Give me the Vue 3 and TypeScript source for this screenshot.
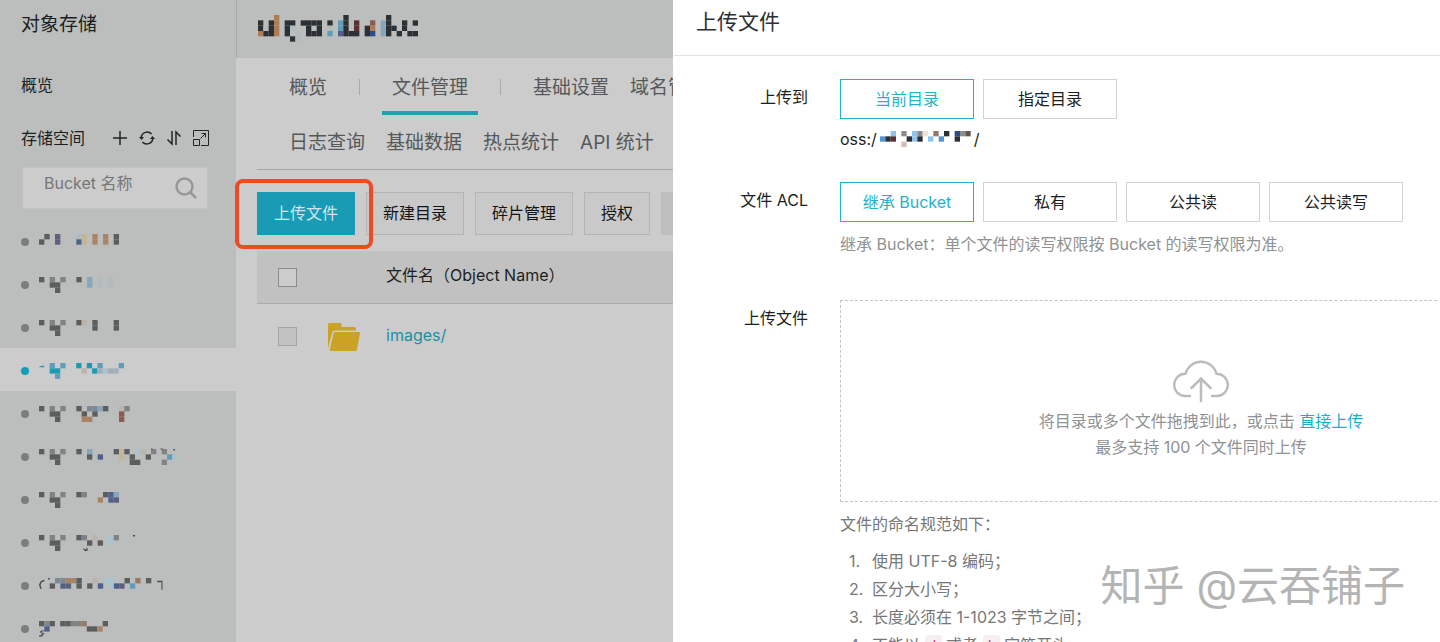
<script setup lang="ts">
import { ref } from 'vue'

interface Cell { x: number; y: number; fill: string }
interface Mosaic { cells: Cell[]; cols: number; rows: number; width: number; height: number }

const palette: Record<string, string> = {
  D: '#2b3034', d: '#5b5d5f', g: '#808283', n: '#5d5f7c', N: '#505f8a', s: '#7d8891',
  b: '#84a6be', B: '#5f9db9', l: '#a9c4cf', x: '#a3aebb', y: '#c3b596', t: '#a98464',
  p: '#bcb3ab', r: '#8a5c54', C: '#1a9bb0', o: '#ad7c54', m: '#5a3133', k: '#b9babb',
  i: '#8fc3ec', u: '#5595ce', v: '#f2e2d6', w: '#d3bfba', q: '#8c8c8d', z: '#2e4c8c',
  j: '#5f564e', h: '#9a7962', e: '#b2bbbe',
}

function mosaic(lines: string[]): Mosaic {
  const cols = Math.max(...lines.map((line) => line.length))
  const cells: Cell[] = []
  lines.forEach((line, y) => {
    Array.from(line).forEach((key, x) => {
      if (palette[key]) cells.push({ x, y, fill: palette[key] })
    })
  })
  return {
    cells, cols, rows: lines.length,
    width: Math.round((cols * 16) / 3),
    height: Math.round((lines.length * 16) / 3),
  }
}

const bucketTitle = mosaic([
  '...o............D.......D.....',
  'D.Do.DD.DDDD.D.BD.m..r.bD..D.D',
  'DkDo.De..D.D.e.BD.m.Do.bDD.Dk.',
  'oDDo.D.e.DDD.B.NDDD.Dz.bD.D.DD',
  '......De......................',
])

const objectPath = mosaic([
  '..i.q.iqv.h.D.zqj',
  'uDm..DiD.i.u..D..',
  '....w............',
])

const buckets = [
  { art: mosaic(['.d.n...ey.t.t.d', 'd..n...Ny.t.t.d']), active: false, strokes: '' },
  { art: mosaic(['d.g.g..d.b.e.e', '..dd.....b.e.e', '...d']), active: false, strokes: '' },
  { art: mosaic(['d.g.g..dp.d...d', '..dd......d...d', '...d']), active: false, strokes: '' },
  { art: mosaic(['..B.B..C.C.B...B', '..CC....p.Cxlxx', '...B']), active: true, strokes: 'M0 .7L.5 .5H1V.8H0Z' },
  { art: mosaic(['d.g.g..d.ssbd..pg', '..dd....d.d....r', '...d....tt.....r']), active: false, strokes: '' },
  { art: mosaic(['d.g.g..d.b....dyd.lp.g.g..', '..dd.....d.N...y.d..d...Bl', '...d.............dd....g']), active: false, strokes: 'M21 -.1h.3v.2h-.3zM22.8 -.1h.4v.2h-.4zM25.2 0h.3v.3h-.3z' },
  { art: mosaic(['d.g.g..dg...dNb', '..dd.......t.Nn', '...d']), active: false, strokes: '' },
  { art: mosaic(['d.g.g..dg.p..lg...', '..dd.....d.d.l', '...d....k']), active: false, strokes: 'M17.6 0h.4v.3h-.4zM8.2 2.5L8.9 2.7V2.4H9.1V3H8.6Z' },
  { art: mosaic(['...ssttd..p.ll..d.h.d..', '..d.Nn.d.d.N.lNn.B']), active: false, strokes: 'M1 .3L.3 .6L0 1.2L.2 2L.5 2.1L.3 1.3L.5 .8L1 .6ZM1.7 0h.3v.3h-.3zM22.1 .5H23.1V2.2H22.9V.8H22.1Z' },
  { art: mosaic(['dsd.ddggh...d', '.N.......ddt', '']), active: false, strokes: 'M.2 1.9L.9 1.7V1.9L.3 2.1ZM.1 2.2L.7 2.4L.3 2.7H0V2.9H.6L1 2.3L.4 2.1Z' },
]

const target = ref('当前目录')
const targets = ['当前目录', '指定目录']
const acl = ref('继承 Bucket')
const acls = ['继承 Bucket', '私有', '公共读', '公共读写']
const keyword = ref('')
const secondaryTabs = ['日志查询', '基础数据', '热点统计', 'API 统计']
</script>

<template>
  <div class="app">
    <div class="console">
      <aside class="sidebar">
        <h1 class="product">对象存储</h1>
        <a class="overview" href="#">概览</a>
        <div class="space-head">
          <span class="space-title">存储空间</span>
          <button class="tool" type="button" aria-label="新建">
            <svg viewBox="0 0 16 16"><path d="M8 1v14M1 8h14" /></svg>
          </button>
          <button class="tool" type="button" aria-label="刷新">
            <svg viewBox="0 0 16 16">
              <path d="M2.2 7.5A6 6 0 0 1 12.6 4M13.8 8.5A6 6 0 0 1 3.4 12" />
              <path class="solid" d="M0 7h5L2.500 10zM11 9h5l-2.500-3z" />
            </svg>
          </button>
          <button class="tool" type="button" aria-label="排序">
            <svg viewBox="0 0 16 16"><path d="M6 1v13L1.500 9.500M10 15V2L14.500 6.500" /></svg>
          </button>
          <button class="tool" type="button" aria-label="展开">
            <svg viewBox="0 0 16 16">
              <path class="thin" d="M.5 7V.5h15v15H8M.5 9.500h6v6h-6zM7.500 8.500l5-5M8.500 3.500h4v4" />
            </svg>
          </button>
        </div>
        <div class="search">
          <input v-model="keyword" type="text" placeholder="Bucket 名称" aria-label="Bucket 名称" />
          <svg class="lens" viewBox="0 0 22 22"><circle cx="9.500" cy="9.500" r="8" /><path d="M15.500 15.500l5.500 5.500" /></svg>
        </div>
        <ul class="buckets">
          <li v-for="(bucket, i) in buckets" :key="i">
            <a href="#" class="bucket" :class="{ active: bucket.active }">
              <span class="dot"></span>
              <svg
                class="mosaic"
                :width="bucket.art.width"
                :height="bucket.art.height"
                :viewBox="`0 0 ${bucket.art.cols} ${bucket.art.rows}`"
                preserveAspectRatio="xMinYMin"
              >
                <rect v-for="(c, k) in bucket.art.cells" :key="k" :x="c.x" :y="c.y" width="1" height="1" :fill="c.fill" />
                <path v-if="bucket.strokes" class="scrap" :d="bucket.strokes" />
              </svg>
            </a>
          </li>
        </ul>
      </aside>

      <main class="main">
        <header class="bucket-header">
          <svg
            class="mosaic"
            :width="bucketTitle.width"
            :height="bucketTitle.height"
            :viewBox="`0 0 ${bucketTitle.cols} ${bucketTitle.rows}`"
            preserveAspectRatio="xMinYMin"
          >
            <rect v-for="(c, k) in bucketTitle.cells" :key="k" :x="c.x" :y="c.y" width="1" height="1" :fill="c.fill" />
          </svg>
        </header>
        <nav class="tabs primary">
          <a href="#">概览</a>
          <span class="sep"></span>
          <a href="#" class="current">文件管理</a>
          <span class="sep"></span>
          <a href="#">基础设置</a>
          <a href="#" class="next">域名管理</a>
        </nav>
        <nav class="tabs secondary">
          <a v-for="tab in secondaryTabs" :key="tab" href="#">{{ tab }}</a>
        </nav>
        <div class="content">
          <div class="toolbar">
            <div class="spotlight">
              <button class="btn filled" type="button">上传文件</button>
            </div>
            <button class="btn" type="button">新建目录</button>
            <button class="btn" type="button">碎片管理</button>
            <button class="btn" type="button">授权</button>
            <button class="btn disabled" type="button" disabled></button>
          </div>
          <table class="files">
            <colgroup><col class="c-check" /><col class="c-icon" /><col /></colgroup>
            <thead>
              <tr>
                <th><input type="checkbox" aria-label="全选" /></th>
                <th></th>
                <th>文件名（Object Name）</th>
              </tr>
            </thead>
            <tbody>
              <tr>
                <td><input type="checkbox" aria-label="images/" disabled /></td>
                <td>
                  <svg class="folder" viewBox="0 0 32 28">
                    <path d="M0 26V1.500Q0 0 1.500 0H12q1.500 0 1.500 1.500V4H26.500Q28 4 28 5.500V7.500H6.500Q4.800 7.500 4.300 9L.8 22Z" />
                    <path d="M7 9H31Q32.300 9 32 10.300L29 26.500Q28.700 28 27.300 28H3Q1.500 28 1.900 26.500L5.600 10.200Q5.900 9 7 9Z" />
                  </svg>
                </td>
                <td><a href="#">images/</a></td>
              </tr>
            </tbody>
          </table>
        </div>
      </main>
    </div>

    <section class="drawer">
      <h2 class="drawer-title">上传文件</h2>
      <div class="form">
        <div class="field">
          <span class="label">上传到</span>
          <div>
            <div class="choices">
              <button
                v-for="t in targets" :key="t" type="button" class="choice"
                :class="{ on: t === target }" @click="target = t"
              >{{ t }}</button>
            </div>
            <p class="path">
              <span>oss:/</span>
              <svg
                class="mosaic"
                :width="objectPath.width"
                :height="objectPath.height"
                :viewBox="`0 0 ${objectPath.cols} ${objectPath.rows}`"
                preserveAspectRatio="xMinYMin"
              >
                <rect v-for="(c, k) in objectPath.cells" :key="k" :x="c.x" :y="c.y" width="1" height="1" :fill="c.fill" />
              </svg>
              <span>/</span>
            </p>
          </div>
        </div>
        <div class="field acl">
          <span class="label">文件 ACL</span>
          <div>
            <div class="choices">
              <button
                v-for="a in acls" :key="a" type="button" class="choice"
                :class="{ on: a === acl }" @click="acl = a"
              >{{ a }}</button>
            </div>
            <p class="hint">继承 Bucket：单个文件的读写权限按 Bucket 的读写权限为准。</p>
          </div>
        </div>
        <div class="field">
          <span class="label">上传文件</span>
          <div class="upload">
            <div class="dropzone">
              <svg class="cloud" viewBox="0 0 56 44">
                <path d="M17 37H12A11 11 0 0 1 12.500 14.800A16 16 0 0 1 43.500 14.800A11 11 0 0 1 44 37H39" />
                <path d="M28 42V19.500M18.500 29L28 19.500L37.500 29" />
              </svg>
              <p>将目录或多个文件拖拽到此，或点击 <a href="#">直接上传</a></p>
              <p>最多支持 100 个文件同时上传</p>
            </div>
            <div class="rules">
              <p>文件的命名规范如下：</p>
              <ol>
                <li>使用 UTF-8 编码；</li>
                <li>区分大小写；</li>
                <li>长度必须在 1-1023 字节之间；</li>
                <li>不能以 <code>/</code> 或者 <code>\</code> 字符开头。</li>
              </ol>
            </div>
          </div>
        </div>
      </div>
      <div class="watermark">知乎 @云吞铺子</div>
    </section>
  </div>
</template>

<style>
body { margin: 0; }
</style>

<style scoped>
.app {
  display: grid;
  grid-template-columns: minmax(0, 673fr) minmax(0, 767fr);
  height: 100vh;
  overflow: hidden;
  font-family: Inter, "Noto Sans CJK SC", sans-serif;
  font-size: 16px;
  line-height: 24px;
  color: #1c1f22;
}
.app *, .app *::before, .app *::after { box-sizing: border-box; }
a { color: inherit; text-decoration: none; }
button, input { font: inherit; color: inherit; }
h1, h2, p, ul, ol { margin: 0; padding: 0; font-weight: 400; }
ul, ol { list-style: none; }
.mosaic { flex: none; overflow: visible; }

.console { display: flex; min-width: 0; overflow: hidden; background: #ccc; }
.sidebar { flex: none; width: 236px; background: #bbbebd; }
.product { padding: 13px 21px 0; font-size: 19px; line-height: 24px; }
.overview { display: block; padding: 36px 21px 0; }
.space-head { display: flex; align-items: center; gap: 11px; padding: 29px 21px 0; }
.space-title { margin-right: 16px; }
.tool { flex: none; width: 16px; height: 16px; padding: 0; border: 0; background: none; }
.tool svg { display: block; width: 16px; height: 16px; fill: none; stroke: #222527; stroke-width: 1.5; }
.tool .solid { fill: #222527; stroke: none; }
.tool .thin { stroke-width: 1; }
.search { position: relative; margin: 17px 28px 10px 22px; }
.search input {
  display: block; width: 100%; height: 42px; padding: 0 44px 10px 21px;
  border: 1px solid #c2c4c4; border-radius: 0; outline: 0; background: #ccc;
}
.search input::placeholder { color: #757778; opacity: 1; }
.lens {
  position: absolute; right: 11px; top: 10px; width: 22px; height: 22px;
  fill: none; stroke: #979898; stroke-width: 2.5;
}
.bucket { display: flex; align-items: flex-start; gap: 10px; height: 43px; padding: 15px 0 0 21px; }
.bucket.active { background: #ccc; }
.dot { flex: none; width: 8px; height: 8px; margin-top: 4px; border-radius: 50%; background: #7c7e7e; }
.active .dot { background: #159db8; }
.scrap { fill: #4a4d4f; }
.active .scrap { fill: #1a9bb0; }

.main { flex: 1; min-width: 0; }
.bucket-header {
  display: flex; align-items: center; height: 58px; padding: 0 0 2px 21px;
  background: #bbbebd; border-left: 1px solid #a8abaa;
}
.tabs { display: flex; padding-left: 53px; font-size: 19px; color: #55585a; white-space: nowrap; }
.tabs a { flex: none; padding-top: 2px; }
.primary { align-items: center; line-height: 55px; }
.sep { flex: none; width: 1px; height: 16px; margin: 0 32px; background: #aaa; }
.current { position: relative; }
.current::after {
  content: ""; position: absolute; left: -10px; right: -10px; bottom: 0; height: 4px; background: #239fb0;
}
.next { margin-left: 21px; }
.secondary { gap: 21px; line-height: 52px; }
.content { margin-left: 21px; border-top: 1px solid #a5a5a5; }
.toolbar { display: flex; gap: 11px; padding: 22px 0 16px; }
.btn {
  flex: none; height: 43px; padding: 0 16px 2px; border: 1px solid #b4b4b4; border-radius: 0;
  background: #c9c9c9; color: #141414; line-height: 24px; white-space: nowrap;
}
.filled { display: block; border-color: #1a9bb5; background: #1a9bb5; color: #d4e4e8; }
.disabled { width: 99px; border-color: #bdbdbd; background: #bfbfbf; }
.spotlight { position: relative; flex: none; }
.spotlight::after {
  content: ""; position: absolute; inset: -13px -18px -14px -22px;
  border: 4px solid #f04a25; border-radius: 8px; pointer-events: none;
}
.files { width: 100%; table-layout: fixed; border-collapse: separate; border-spacing: 0; }
.c-check { width: 71px; }
.c-icon { width: 58px; }
.files th, .files td { padding: 0; text-align: left; font-weight: 400; white-space: nowrap; }
.files th { height: 53px; border-bottom: 1px solid #ababab; background: #c1c1c1; }
.files td { height: 65px; }
.files th:last-child { padding-bottom: 4px; }
.files td:last-child { padding-bottom: 4px; }
.files td a { color: #1c8fa3; }
.files input {
  display: block; appearance: none; width: 19px; height: 19px; margin: 0 0 0 21px;
  border: 1px solid #8c8c8c; border-radius: 0; background: #ccc;
}
.files input:disabled { border-color: #a5a5a5; background: #c2c2c2; }
.folder { display: block; width: 32px; height: 28px; fill: #cba223; }

.drawer { position: relative; min-width: 0; overflow: hidden; border-left: 1px solid #fff; background: #fff; }
.drawer-title {
  height: 56px; padding: 8px 22px 0; border-bottom: 1px solid #e4e4e4;
  font-size: 21px; line-height: 28px; color: #2c3034;
}
.form { padding-top: 23px; }
.field { display: grid; grid-template-columns: 134px minmax(0, 1fr); column-gap: 32px; }
.label { line-height: 36px; text-align: right; }
.choices { display: flex; gap: 9px; }
.choice {
  flex: 0 1 134px; height: 40px; padding: 0; border: 1px solid #d2d2d2; border-radius: 0;
  background: #fff; white-space: nowrap;
}
.choice.on { border-color: #25b2c8; color: #25b2c8; }
.path { display: flex; align-items: center; gap: 3px; height: 40px; }
.acl { margin-top: 23px; }
.hint { padding: 10px 0 44px; color: #8f9192; white-space: nowrap; }
.upload { margin-right: 3px; overflow: hidden; }
.dropzone {
  width: 722px; height: 202px; padding-top: 58px; border: 1px dashed #c4c4c4;
  text-align: center; line-height: 26px; color: #8f9192;
}
.dropzone a { color: #18b0cc; }
.cloud {
  display: block; width: 56px; height: 44px; margin: 0 auto 5px;
  fill: none; stroke: #bcbcbc; stroke-width: 2.500; stroke-linecap: round;
}
.rules { padding-top: 10px; color: #757778; white-space: nowrap; }
.rules ol { padding: 11px 0 0 9px; line-height: 28px; counter-reset: rule; }
.rules li { counter-increment: rule; }
.rules li::before { content: counter(rule) "."; display: inline-block; width: 23px; }
code { padding: 2px 6px; border-radius: 3px; background: #f5eff1; color: #c7254e; font-family: inherit; font-size: 14px; }
.watermark {
  position: absolute; right: 35px; bottom: 26px; font-size: 42px; line-height: 60px;
  white-space: nowrap; color: #b4b4b4; pointer-events: none;
}
</style>
